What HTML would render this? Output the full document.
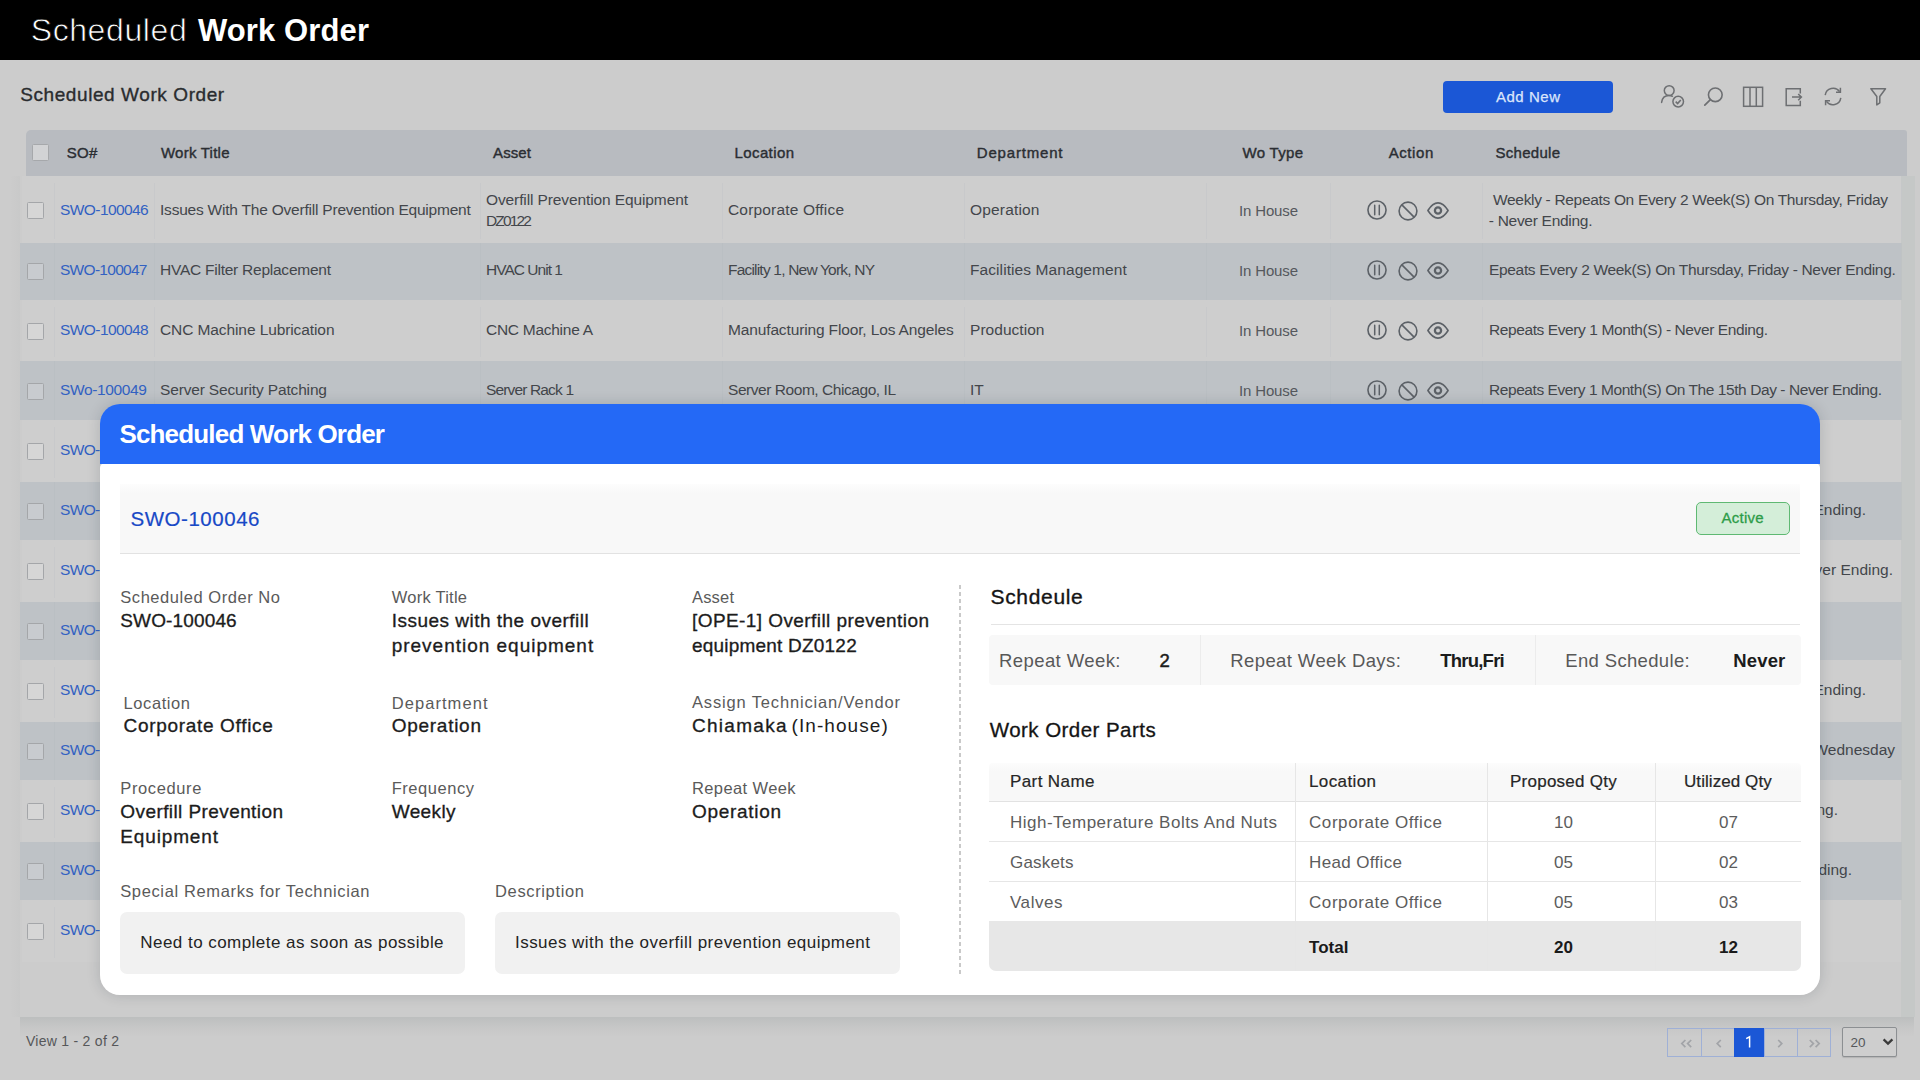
<!DOCTYPE html>
<html><head><meta charset="utf-8"><title>Scheduled Work Order</title>
<style>
html,body{margin:0;padding:0;}
body{width:1920px;height:1080px;overflow:hidden;position:relative;background:#cccccc;font-family:"Liberation Sans",sans-serif;}
.layer{position:absolute;left:0;top:0;width:1920px;height:1080px;overflow:hidden;}
.layer>div{position:absolute;box-sizing:border-box;}
.layer>svg{position:absolute;overflow:visible;}
.t{position:absolute;white-space:nowrap;line-height:0;}
.thin{-webkit-text-stroke:0.75px #000;}
</style></head><body>
<div class="layer" style="">
<div style="left:0px;top:0px;width:1920px;height:60px;background:#000;"></div>
<div style="left:1443px;top:81px;width:170px;height:31.5px;background:#1b57d6;border-radius:4px;"></div>
<div style="left:19.5px;top:1016.5px;width:1894px;height:20px;background:linear-gradient(rgba(40,60,60,.095),rgba(40,60,60,.03) 55%,rgba(40,60,60,0));"></div>
<div style="left:10px;top:176px;width:10px;height:841px;background:linear-gradient(90deg,rgba(40,50,50,0),rgba(40,50,50,.018));"></div>
<div style="left:1901px;top:176px;width:13.5px;height:841px;background:#c5c8c7;"></div>
<div style="left:26px;top:130px;width:1881px;height:45.5px;background:#b8bbc0;border-radius:5px 3px 0 0;"></div>
<div style="left:32.3px;top:144.3px;width:16.5px;height:16.5px;background:#d2d3d5;border:1px solid #a6a8ab;border-radius:1.5px;"></div>
<div style="left:22px;top:175.5px;width:1879px;height:67.0px;background:#cecece;"></div>
<div style="left:20px;top:242.5px;width:1881px;height:57.5px;background:#bec2c6;"></div>
<div style="left:22px;top:300px;width:1879px;height:60.5px;background:#cecece;"></div>
<div style="left:20px;top:360.5px;width:1881px;height:59.0px;background:#bec2c6;"></div>
<div style="left:22px;top:419.5px;width:1879px;height:62.0px;background:#cecece;"></div>
<div style="left:20px;top:481.5px;width:1881px;height:58.0px;background:#bec2c6;"></div>
<div style="left:22px;top:539.5px;width:1879px;height:62.0px;background:#cecece;"></div>
<div style="left:20px;top:601.5px;width:1881px;height:58.0px;background:#bec2c6;"></div>
<div style="left:22px;top:659.5px;width:1879px;height:62.0px;background:#cecece;"></div>
<div style="left:20px;top:721.5px;width:1881px;height:58.0px;background:#bec2c6;"></div>
<div style="left:22px;top:779.5px;width:1879px;height:62.0px;background:#cecece;"></div>
<div style="left:20px;top:841.5px;width:1881px;height:58.0px;background:#bec2c6;"></div>
<div style="left:22px;top:899.5px;width:1879px;height:62.5px;background:#cecece;"></div>
<div style="left:54.0px;top:182.5px;width:1px;height:56.0px;background:#c4c6c9;opacity:.6;"></div>
<div style="left:154.0px;top:182.5px;width:1px;height:56.0px;background:#c4c6c9;opacity:.6;"></div>
<div style="left:480.0px;top:182.5px;width:1px;height:56.0px;background:#c4c6c9;opacity:.6;"></div>
<div style="left:721.5px;top:182.5px;width:1px;height:56.0px;background:#c4c6c9;opacity:.6;"></div>
<div style="left:963.5px;top:182.5px;width:1px;height:56.0px;background:#c4c6c9;opacity:.6;"></div>
<div style="left:1206.0px;top:182.5px;width:1px;height:56.0px;background:#c4c6c9;opacity:.6;"></div>
<div style="left:1330.0px;top:182.5px;width:1px;height:56.0px;background:#c4c6c9;opacity:.6;"></div>
<div style="left:1482.0px;top:182.5px;width:1px;height:56.0px;background:#c4c6c9;opacity:.6;"></div>
<div style="left:1900.5px;top:182.5px;width:1px;height:56.0px;background:#c4c6c9;opacity:.6;"></div>
<div style="left:54.0px;top:242.5px;width:1px;height:57.5px;background:#b4b8bd;opacity:.3;"></div>
<div style="left:154.0px;top:242.5px;width:1px;height:57.5px;background:#b4b8bd;opacity:.3;"></div>
<div style="left:480.0px;top:242.5px;width:1px;height:57.5px;background:#b4b8bd;opacity:.3;"></div>
<div style="left:721.5px;top:242.5px;width:1px;height:57.5px;background:#b4b8bd;opacity:.3;"></div>
<div style="left:963.5px;top:242.5px;width:1px;height:57.5px;background:#b4b8bd;opacity:.3;"></div>
<div style="left:1206.0px;top:242.5px;width:1px;height:57.5px;background:#b4b8bd;opacity:.3;"></div>
<div style="left:1330.0px;top:242.5px;width:1px;height:57.5px;background:#b4b8bd;opacity:.3;"></div>
<div style="left:1482.0px;top:242.5px;width:1px;height:57.5px;background:#b4b8bd;opacity:.3;"></div>
<div style="left:1900.5px;top:242.5px;width:1px;height:57.5px;background:#b4b8bd;opacity:.3;"></div>
<div style="left:54.0px;top:307px;width:1px;height:49.5px;background:#c4c6c9;opacity:.6;"></div>
<div style="left:154.0px;top:307px;width:1px;height:49.5px;background:#c4c6c9;opacity:.6;"></div>
<div style="left:480.0px;top:307px;width:1px;height:49.5px;background:#c4c6c9;opacity:.6;"></div>
<div style="left:721.5px;top:307px;width:1px;height:49.5px;background:#c4c6c9;opacity:.6;"></div>
<div style="left:963.5px;top:307px;width:1px;height:49.5px;background:#c4c6c9;opacity:.6;"></div>
<div style="left:1206.0px;top:307px;width:1px;height:49.5px;background:#c4c6c9;opacity:.6;"></div>
<div style="left:1330.0px;top:307px;width:1px;height:49.5px;background:#c4c6c9;opacity:.6;"></div>
<div style="left:1482.0px;top:307px;width:1px;height:49.5px;background:#c4c6c9;opacity:.6;"></div>
<div style="left:1900.5px;top:307px;width:1px;height:49.5px;background:#c4c6c9;opacity:.6;"></div>
<div style="left:54.0px;top:360.5px;width:1px;height:59.0px;background:#b4b8bd;opacity:.3;"></div>
<div style="left:154.0px;top:360.5px;width:1px;height:59.0px;background:#b4b8bd;opacity:.3;"></div>
<div style="left:480.0px;top:360.5px;width:1px;height:59.0px;background:#b4b8bd;opacity:.3;"></div>
<div style="left:721.5px;top:360.5px;width:1px;height:59.0px;background:#b4b8bd;opacity:.3;"></div>
<div style="left:963.5px;top:360.5px;width:1px;height:59.0px;background:#b4b8bd;opacity:.3;"></div>
<div style="left:1206.0px;top:360.5px;width:1px;height:59.0px;background:#b4b8bd;opacity:.3;"></div>
<div style="left:1330.0px;top:360.5px;width:1px;height:59.0px;background:#b4b8bd;opacity:.3;"></div>
<div style="left:1482.0px;top:360.5px;width:1px;height:59.0px;background:#b4b8bd;opacity:.3;"></div>
<div style="left:1900.5px;top:360.5px;width:1px;height:59.0px;background:#b4b8bd;opacity:.3;"></div>
<div style="left:54.0px;top:426.5px;width:1px;height:51.0px;background:#c4c6c9;opacity:.6;"></div>
<div style="left:154.0px;top:426.5px;width:1px;height:51.0px;background:#c4c6c9;opacity:.6;"></div>
<div style="left:480.0px;top:426.5px;width:1px;height:51.0px;background:#c4c6c9;opacity:.6;"></div>
<div style="left:721.5px;top:426.5px;width:1px;height:51.0px;background:#c4c6c9;opacity:.6;"></div>
<div style="left:963.5px;top:426.5px;width:1px;height:51.0px;background:#c4c6c9;opacity:.6;"></div>
<div style="left:1206.0px;top:426.5px;width:1px;height:51.0px;background:#c4c6c9;opacity:.6;"></div>
<div style="left:1330.0px;top:426.5px;width:1px;height:51.0px;background:#c4c6c9;opacity:.6;"></div>
<div style="left:1482.0px;top:426.5px;width:1px;height:51.0px;background:#c4c6c9;opacity:.6;"></div>
<div style="left:1900.5px;top:426.5px;width:1px;height:51.0px;background:#c4c6c9;opacity:.6;"></div>
<div style="left:54.0px;top:481.5px;width:1px;height:58.0px;background:#b4b8bd;opacity:.3;"></div>
<div style="left:154.0px;top:481.5px;width:1px;height:58.0px;background:#b4b8bd;opacity:.3;"></div>
<div style="left:480.0px;top:481.5px;width:1px;height:58.0px;background:#b4b8bd;opacity:.3;"></div>
<div style="left:721.5px;top:481.5px;width:1px;height:58.0px;background:#b4b8bd;opacity:.3;"></div>
<div style="left:963.5px;top:481.5px;width:1px;height:58.0px;background:#b4b8bd;opacity:.3;"></div>
<div style="left:1206.0px;top:481.5px;width:1px;height:58.0px;background:#b4b8bd;opacity:.3;"></div>
<div style="left:1330.0px;top:481.5px;width:1px;height:58.0px;background:#b4b8bd;opacity:.3;"></div>
<div style="left:1482.0px;top:481.5px;width:1px;height:58.0px;background:#b4b8bd;opacity:.3;"></div>
<div style="left:1900.5px;top:481.5px;width:1px;height:58.0px;background:#b4b8bd;opacity:.3;"></div>
<div style="left:54.0px;top:546.5px;width:1px;height:51.0px;background:#c4c6c9;opacity:.6;"></div>
<div style="left:154.0px;top:546.5px;width:1px;height:51.0px;background:#c4c6c9;opacity:.6;"></div>
<div style="left:480.0px;top:546.5px;width:1px;height:51.0px;background:#c4c6c9;opacity:.6;"></div>
<div style="left:721.5px;top:546.5px;width:1px;height:51.0px;background:#c4c6c9;opacity:.6;"></div>
<div style="left:963.5px;top:546.5px;width:1px;height:51.0px;background:#c4c6c9;opacity:.6;"></div>
<div style="left:1206.0px;top:546.5px;width:1px;height:51.0px;background:#c4c6c9;opacity:.6;"></div>
<div style="left:1330.0px;top:546.5px;width:1px;height:51.0px;background:#c4c6c9;opacity:.6;"></div>
<div style="left:1482.0px;top:546.5px;width:1px;height:51.0px;background:#c4c6c9;opacity:.6;"></div>
<div style="left:1900.5px;top:546.5px;width:1px;height:51.0px;background:#c4c6c9;opacity:.6;"></div>
<div style="left:54.0px;top:601.5px;width:1px;height:58.0px;background:#b4b8bd;opacity:.3;"></div>
<div style="left:154.0px;top:601.5px;width:1px;height:58.0px;background:#b4b8bd;opacity:.3;"></div>
<div style="left:480.0px;top:601.5px;width:1px;height:58.0px;background:#b4b8bd;opacity:.3;"></div>
<div style="left:721.5px;top:601.5px;width:1px;height:58.0px;background:#b4b8bd;opacity:.3;"></div>
<div style="left:963.5px;top:601.5px;width:1px;height:58.0px;background:#b4b8bd;opacity:.3;"></div>
<div style="left:1206.0px;top:601.5px;width:1px;height:58.0px;background:#b4b8bd;opacity:.3;"></div>
<div style="left:1330.0px;top:601.5px;width:1px;height:58.0px;background:#b4b8bd;opacity:.3;"></div>
<div style="left:1482.0px;top:601.5px;width:1px;height:58.0px;background:#b4b8bd;opacity:.3;"></div>
<div style="left:1900.5px;top:601.5px;width:1px;height:58.0px;background:#b4b8bd;opacity:.3;"></div>
<div style="left:54.0px;top:666.5px;width:1px;height:51.0px;background:#c4c6c9;opacity:.6;"></div>
<div style="left:154.0px;top:666.5px;width:1px;height:51.0px;background:#c4c6c9;opacity:.6;"></div>
<div style="left:480.0px;top:666.5px;width:1px;height:51.0px;background:#c4c6c9;opacity:.6;"></div>
<div style="left:721.5px;top:666.5px;width:1px;height:51.0px;background:#c4c6c9;opacity:.6;"></div>
<div style="left:963.5px;top:666.5px;width:1px;height:51.0px;background:#c4c6c9;opacity:.6;"></div>
<div style="left:1206.0px;top:666.5px;width:1px;height:51.0px;background:#c4c6c9;opacity:.6;"></div>
<div style="left:1330.0px;top:666.5px;width:1px;height:51.0px;background:#c4c6c9;opacity:.6;"></div>
<div style="left:1482.0px;top:666.5px;width:1px;height:51.0px;background:#c4c6c9;opacity:.6;"></div>
<div style="left:1900.5px;top:666.5px;width:1px;height:51.0px;background:#c4c6c9;opacity:.6;"></div>
<div style="left:54.0px;top:721.5px;width:1px;height:58.0px;background:#b4b8bd;opacity:.3;"></div>
<div style="left:154.0px;top:721.5px;width:1px;height:58.0px;background:#b4b8bd;opacity:.3;"></div>
<div style="left:480.0px;top:721.5px;width:1px;height:58.0px;background:#b4b8bd;opacity:.3;"></div>
<div style="left:721.5px;top:721.5px;width:1px;height:58.0px;background:#b4b8bd;opacity:.3;"></div>
<div style="left:963.5px;top:721.5px;width:1px;height:58.0px;background:#b4b8bd;opacity:.3;"></div>
<div style="left:1206.0px;top:721.5px;width:1px;height:58.0px;background:#b4b8bd;opacity:.3;"></div>
<div style="left:1330.0px;top:721.5px;width:1px;height:58.0px;background:#b4b8bd;opacity:.3;"></div>
<div style="left:1482.0px;top:721.5px;width:1px;height:58.0px;background:#b4b8bd;opacity:.3;"></div>
<div style="left:1900.5px;top:721.5px;width:1px;height:58.0px;background:#b4b8bd;opacity:.3;"></div>
<div style="left:54.0px;top:786.5px;width:1px;height:51.0px;background:#c4c6c9;opacity:.6;"></div>
<div style="left:154.0px;top:786.5px;width:1px;height:51.0px;background:#c4c6c9;opacity:.6;"></div>
<div style="left:480.0px;top:786.5px;width:1px;height:51.0px;background:#c4c6c9;opacity:.6;"></div>
<div style="left:721.5px;top:786.5px;width:1px;height:51.0px;background:#c4c6c9;opacity:.6;"></div>
<div style="left:963.5px;top:786.5px;width:1px;height:51.0px;background:#c4c6c9;opacity:.6;"></div>
<div style="left:1206.0px;top:786.5px;width:1px;height:51.0px;background:#c4c6c9;opacity:.6;"></div>
<div style="left:1330.0px;top:786.5px;width:1px;height:51.0px;background:#c4c6c9;opacity:.6;"></div>
<div style="left:1482.0px;top:786.5px;width:1px;height:51.0px;background:#c4c6c9;opacity:.6;"></div>
<div style="left:1900.5px;top:786.5px;width:1px;height:51.0px;background:#c4c6c9;opacity:.6;"></div>
<div style="left:54.0px;top:841.5px;width:1px;height:58.0px;background:#b4b8bd;opacity:.3;"></div>
<div style="left:154.0px;top:841.5px;width:1px;height:58.0px;background:#b4b8bd;opacity:.3;"></div>
<div style="left:480.0px;top:841.5px;width:1px;height:58.0px;background:#b4b8bd;opacity:.3;"></div>
<div style="left:721.5px;top:841.5px;width:1px;height:58.0px;background:#b4b8bd;opacity:.3;"></div>
<div style="left:963.5px;top:841.5px;width:1px;height:58.0px;background:#b4b8bd;opacity:.3;"></div>
<div style="left:1206.0px;top:841.5px;width:1px;height:58.0px;background:#b4b8bd;opacity:.3;"></div>
<div style="left:1330.0px;top:841.5px;width:1px;height:58.0px;background:#b4b8bd;opacity:.3;"></div>
<div style="left:1482.0px;top:841.5px;width:1px;height:58.0px;background:#b4b8bd;opacity:.3;"></div>
<div style="left:1900.5px;top:841.5px;width:1px;height:58.0px;background:#b4b8bd;opacity:.3;"></div>
<div style="left:54.0px;top:906.5px;width:1px;height:51.5px;background:#c4c6c9;opacity:.6;"></div>
<div style="left:154.0px;top:906.5px;width:1px;height:51.5px;background:#c4c6c9;opacity:.6;"></div>
<div style="left:480.0px;top:906.5px;width:1px;height:51.5px;background:#c4c6c9;opacity:.6;"></div>
<div style="left:721.5px;top:906.5px;width:1px;height:51.5px;background:#c4c6c9;opacity:.6;"></div>
<div style="left:963.5px;top:906.5px;width:1px;height:51.5px;background:#c4c6c9;opacity:.6;"></div>
<div style="left:1206.0px;top:906.5px;width:1px;height:51.5px;background:#c4c6c9;opacity:.6;"></div>
<div style="left:1330.0px;top:906.5px;width:1px;height:51.5px;background:#c4c6c9;opacity:.6;"></div>
<div style="left:1482.0px;top:906.5px;width:1px;height:51.5px;background:#c4c6c9;opacity:.6;"></div>
<div style="left:1900.5px;top:906.5px;width:1px;height:51.5px;background:#c4c6c9;opacity:.6;"></div>
<div style="left:27px;top:201.5px;width:17px;height:17px;background:rgba(255,255,255,.16);border:1px solid #a4a6a9;border-radius:1.5px;"></div>
<div style="left:27px;top:262.5px;width:17px;height:17px;background:rgba(255,255,255,.16);border:1px solid #a4a6a9;border-radius:1.5px;"></div>
<div style="left:27px;top:322.5px;width:17px;height:17px;background:rgba(255,255,255,.16);border:1px solid #a4a6a9;border-radius:1.5px;"></div>
<div style="left:27px;top:382.5px;width:17px;height:17px;background:rgba(255,255,255,.16);border:1px solid #a4a6a9;border-radius:1.5px;"></div>
<div style="left:27px;top:442.5px;width:17px;height:17px;background:rgba(255,255,255,.16);border:1px solid #a4a6a9;border-radius:1.5px;"></div>
<div style="left:27px;top:502.5px;width:17px;height:17px;background:rgba(255,255,255,.16);border:1px solid #a4a6a9;border-radius:1.5px;"></div>
<div style="left:27px;top:562.5px;width:17px;height:17px;background:rgba(255,255,255,.16);border:1px solid #a4a6a9;border-radius:1.5px;"></div>
<div style="left:27px;top:622.5px;width:17px;height:17px;background:rgba(255,255,255,.16);border:1px solid #a4a6a9;border-radius:1.5px;"></div>
<div style="left:27px;top:682.5px;width:17px;height:17px;background:rgba(255,255,255,.16);border:1px solid #a4a6a9;border-radius:1.5px;"></div>
<div style="left:27px;top:742.5px;width:17px;height:17px;background:rgba(255,255,255,.16);border:1px solid #a4a6a9;border-radius:1.5px;"></div>
<div style="left:27px;top:802.5px;width:17px;height:17px;background:rgba(255,255,255,.16);border:1px solid #a4a6a9;border-radius:1.5px;"></div>
<div style="left:27px;top:862.5px;width:17px;height:17px;background:rgba(255,255,255,.16);border:1px solid #a4a6a9;border-radius:1.5px;"></div>
<div style="left:27px;top:922.5px;width:17px;height:17px;background:rgba(255,255,255,.16);border:1px solid #a4a6a9;border-radius:1.5px;"></div>
<div style="left:1667px;top:1027.5px;width:164px;height:29.5px;border:1px solid #9fb0d6;"></div>
<div style="left:1701px;top:1027.5px;width:1px;height:29.5px;background:#9fb0d6;"></div>
<div style="left:1764px;top:1027.5px;width:1px;height:29.5px;background:#9fb0d6;"></div>
<div style="left:1796.5px;top:1027.5px;width:1px;height:29.5px;background:#9fb0d6;"></div>
<div style="left:1734px;top:1027.5px;width:30px;height:29.5px;background:#1b57d6;"></div>
<div style="left:1841.5px;top:1027px;width:55.5px;height:29.5px;border:1px solid #8c8f92;border-radius:2px;background:#cecece;box-shadow:0 1px 1px rgba(0,0,0,.12);"></div>
<span class="t thin" style="top:30.31px;font-size:32px;color:#ffffff;letter-spacing:0.596px;left:30.7px;">Scheduled</span>
<span class="t" style="top:31.06px;font-size:31px;color:#fff;font-weight:bold;letter-spacing:0.113px;left:198px;">Work Order</span>
<span class="t" style="top:94.52px;font-size:19px;color:#2a2c2f;-webkit-text-stroke:0.35px #2a2c2f;letter-spacing:0.584px;left:20.2px;">Scheduled Work Order</span>
<span class="t" style="top:96.80px;font-size:15px;color:#dbe5fb;-webkit-text-stroke:0.25px #dbe5fb;letter-spacing:0.521px;left:1328.26px;width:400px;text-align:center;">Add New</span>
<span class="t" style="top:152.80px;font-size:15px;color:#2b2e33;-webkit-text-stroke:0.4px #2b2e33;letter-spacing:0.242px;left:66.75px;">SO#</span>
<span class="t" style="top:152.80px;font-size:15px;color:#2b2e33;-webkit-text-stroke:0.4px #2b2e33;letter-spacing:0.233px;left:161px;">Work Title</span>
<span class="t" style="top:152.80px;font-size:15px;color:#2b2e33;-webkit-text-stroke:0.4px #2b2e33;letter-spacing:0.121px;left:493px;">Asset</span>
<span class="t" style="top:152.80px;font-size:15px;color:#2b2e33;-webkit-text-stroke:0.4px #2b2e33;letter-spacing:0.397px;left:734.5px;">Location</span>
<span class="t" style="top:152.80px;font-size:15px;color:#2b2e33;-webkit-text-stroke:0.4px #2b2e33;letter-spacing:0.819px;left:976.75px;">Department</span>
<span class="t" style="top:152.80px;font-size:15px;color:#2b2e33;-webkit-text-stroke:0.4px #2b2e33;letter-spacing:0.307px;left:1242.5px;">Wo Type</span>
<span class="t" style="top:152.80px;font-size:15px;color:#2b2e33;-webkit-text-stroke:0.4px #2b2e33;letter-spacing:0.559px;left:1388.75px;">Action</span>
<span class="t" style="top:152.80px;font-size:15px;color:#2b2e33;-webkit-text-stroke:0.4px #2b2e33;letter-spacing:0.277px;left:1495.5px;">Schedule</span>
<span class="t" style="top:210.13px;font-size:15.5px;color:#3261c2;letter-spacing:-0.575px;left:60px;">SWO-100046</span>
<span class="t" style="top:210.13px;font-size:15.5px;color:#43464b;letter-spacing:-0.214px;left:160px;">Issues With The Overfill Prevention Equipment</span>
<span class="t" style="top:210.13px;font-size:15.5px;color:#43464b;letter-spacing:0.171px;left:728px;">Corporate Office</span>
<span class="t" style="top:210.13px;font-size:15.5px;color:#43464b;letter-spacing:0.178px;left:970px;">Operation</span>
<span class="t" style="top:211.05px;font-size:15px;color:#55585d;letter-spacing:-0.150px;left:1239px;">In House</span>
<span class="t" style="top:270.13px;font-size:15.5px;color:#3261c2;letter-spacing:-0.714px;left:60px;">SWO-100047</span>
<span class="t" style="top:270.13px;font-size:15.5px;color:#43464b;letter-spacing:-0.241px;left:160px;">HVAC Filter Replacement</span>
<span class="t" style="top:270.13px;font-size:15.5px;color:#43464b;letter-spacing:-0.972px;left:486px;">HVAC Unit 1</span>
<span class="t" style="top:270.13px;font-size:15.5px;color:#43464b;letter-spacing:-0.800px;left:728px;">Facility 1, New York, NY</span>
<span class="t" style="top:270.13px;font-size:15.5px;color:#43464b;letter-spacing:0.084px;left:970px;">Facilities Management</span>
<span class="t" style="top:271.05px;font-size:15px;color:#55585d;letter-spacing:-0.150px;left:1239px;">In House</span>
<span class="t" style="top:270.13px;font-size:15.5px;color:#43464b;letter-spacing:-0.330px;left:1489px;">Epeats Every 2 Week(S) On Thursday, Friday - Never Ending.</span>
<span class="t" style="top:330.13px;font-size:15.5px;color:#3261c2;letter-spacing:-0.575px;left:60px;">SWO-100048</span>
<span class="t" style="top:330.13px;font-size:15.5px;color:#43464b;letter-spacing:-0.096px;left:160px;">CNC Machine Lubrication</span>
<span class="t" style="top:330.13px;font-size:15.5px;color:#43464b;letter-spacing:-0.272px;left:486px;">CNC Machine A</span>
<span class="t" style="top:330.13px;font-size:15.5px;color:#43464b;letter-spacing:-0.139px;left:728px;">Manufacturing Floor, Los Angeles</span>
<span class="t" style="top:330.13px;font-size:15.5px;color:#43464b;letter-spacing:0.043px;left:970px;">Production</span>
<span class="t" style="top:331.05px;font-size:15px;color:#55585d;letter-spacing:-0.150px;left:1239px;">In House</span>
<span class="t" style="top:330.13px;font-size:15.5px;color:#43464b;letter-spacing:-0.401px;left:1489px;">Repeats Every 1 Month(S) - Never Ending.</span>
<span class="t" style="top:390.13px;font-size:15.5px;color:#3261c2;letter-spacing:-0.356px;left:60px;">SWo-100049</span>
<span class="t" style="top:390.13px;font-size:15.5px;color:#43464b;letter-spacing:-0.156px;left:160px;">Server Security Patching</span>
<span class="t" style="top:390.13px;font-size:15.5px;color:#43464b;letter-spacing:-0.850px;left:486px;">Server Rack 1</span>
<span class="t" style="top:390.13px;font-size:15.5px;color:#43464b;letter-spacing:-0.449px;left:728px;">Server Room, Chicago, IL</span>
<span class="t" style="top:390.13px;font-size:15.5px;color:#43464b;left:970px;">IT</span>
<span class="t" style="top:391.05px;font-size:15px;color:#55585d;letter-spacing:-0.150px;left:1239px;">In House</span>
<span class="t" style="top:390.13px;font-size:15.5px;color:#43464b;letter-spacing:-0.431px;left:1489px;">Repeats Every 1 Month(S) On The 15th Day - Never Ending.</span>
<span class="t" style="top:450.13px;font-size:15.5px;color:#3261c2;letter-spacing:-0.658px;left:60px;">SWO-100050</span>
<span class="t" style="top:510.13px;font-size:15.5px;color:#3261c2;letter-spacing:-0.658px;left:60px;">SWO-100051</span>
<span class="t" style="top:570.13px;font-size:15.5px;color:#3261c2;letter-spacing:-0.658px;left:60px;">SWO-100052</span>
<span class="t" style="top:630.13px;font-size:15.5px;color:#3261c2;letter-spacing:-0.658px;left:60px;">SWO-100053</span>
<span class="t" style="top:690.13px;font-size:15.5px;color:#3261c2;letter-spacing:-0.658px;left:60px;">SWO-100054</span>
<span class="t" style="top:750.13px;font-size:15.5px;color:#3261c2;letter-spacing:-0.658px;left:60px;">SWO-100055</span>
<span class="t" style="top:810.13px;font-size:15.5px;color:#3261c2;letter-spacing:-0.658px;left:60px;">SWO-100056</span>
<span class="t" style="top:870.13px;font-size:15.5px;color:#3261c2;letter-spacing:-0.658px;left:60px;">SWO-100057</span>
<span class="t" style="top:930.13px;font-size:15.5px;color:#3261c2;letter-spacing:-0.658px;left:60px;">SWO-100058</span>
<span class="t" style="top:199.63px;font-size:15.5px;color:#43464b;letter-spacing:-0.109px;left:486px;">Overfill Prevention Equipment</span>
<span class="t" style="top:220.63px;font-size:15.5px;color:#43464b;letter-spacing:-1.831px;left:486px;">DZ0122</span>
<span class="t" style="top:199.63px;font-size:15.5px;color:#43464b;letter-spacing:-0.321px;left:1493px;">Weekly - Repeats On Every 2 Week(S) On Thursday, Friday</span>
<span class="t" style="top:220.63px;font-size:15.5px;color:#43464b;letter-spacing:-0.282px;left:1488.75px;">- Never Ending.</span>
<span class="t" style="top:510.13px;font-size:15.5px;color:#43464b;right:54.00px;">Repeats Every 3 Month(S) - Never Ending.</span>
<span class="t" style="top:570.13px;font-size:15.5px;color:#43464b;right:27.00px;">Repeats Every 2 Week(S) On Monday - Never Ending.</span>
<span class="t" style="top:690.13px;font-size:15.5px;color:#43464b;right:54.00px;">Repeats Every 6 Month(S) - Never Ending.</span>
<span class="t" style="top:750.13px;font-size:15.5px;color:#43464b;right:25.00px;">Weekly - Repeats On Every 1 Week(S) On Wednesday</span>
<span class="t" style="top:810.13px;font-size:15.5px;color:#43464b;right:82.00px;">Repeats Every 1 Year(S) - Never Ending.</span>
<span class="t" style="top:870.13px;font-size:15.5px;color:#43464b;right:68.00px;">Repeats Every 1 Month(S) - Never Ending.</span>
<span class="t" style="top:1041.45px;font-size:14px;color:#565759;letter-spacing:0.268px;left:26px;">View 1 - 2 of 2</span>
<span class="t" style="top:1042.62px;font-size:13.5px;color:#55585b;left:1850.5px;">20</span>
<svg style="left:1367.2px;top:199.8px;" width="20" height="20" viewBox="0 0 20 20" fill="none" ><circle cx="10" cy="10" r="9.05" stroke="#5c6167" stroke-width="1.6"/><path d="M7.7 5.3v9.4M12.3 5.3v9.4" stroke="#5c6167" stroke-width="1.5" stroke-linecap="round"/></svg>
<svg style="left:1398.2px;top:200.5px;" width="20" height="20" viewBox="0 0 20 20" fill="none" ><circle cx="10" cy="10" r="8.9" stroke="#5c6167" stroke-width="1.6"/><path d="M3.9 3.9L16.1 16.1" stroke="#5c6167" stroke-width="1.6"/></svg>
<svg style="left:1427.1px;top:202.0px;" width="22" height="17" viewBox="0 0 22 17" fill="none" ><path d="M0.9 8.5C4.2 3.2 7.6 0.9 11 0.9S17.8 3.2 21.1 8.5C17.8 13.8 14.4 16.1 11 16.1S4.2 13.8 0.9 8.5Z" stroke="#5c6167" stroke-width="1.6" stroke-linejoin="round"/><circle cx="11" cy="8.5" r="3.1" stroke="#5c6167" stroke-width="2.3"/></svg>
<svg style="left:1367.2px;top:259.8px;" width="20" height="20" viewBox="0 0 20 20" fill="none" ><circle cx="10" cy="10" r="9.05" stroke="#5c6167" stroke-width="1.6"/><path d="M7.7 5.3v9.4M12.3 5.3v9.4" stroke="#5c6167" stroke-width="1.5" stroke-linecap="round"/></svg>
<svg style="left:1398.2px;top:260.5px;" width="20" height="20" viewBox="0 0 20 20" fill="none" ><circle cx="10" cy="10" r="8.9" stroke="#5c6167" stroke-width="1.6"/><path d="M3.9 3.9L16.1 16.1" stroke="#5c6167" stroke-width="1.6"/></svg>
<svg style="left:1427.1px;top:262.0px;" width="22" height="17" viewBox="0 0 22 17" fill="none" ><path d="M0.9 8.5C4.2 3.2 7.6 0.9 11 0.9S17.8 3.2 21.1 8.5C17.8 13.8 14.4 16.1 11 16.1S4.2 13.8 0.9 8.5Z" stroke="#5c6167" stroke-width="1.6" stroke-linejoin="round"/><circle cx="11" cy="8.5" r="3.1" stroke="#5c6167" stroke-width="2.3"/></svg>
<svg style="left:1367.2px;top:319.8px;" width="20" height="20" viewBox="0 0 20 20" fill="none" ><circle cx="10" cy="10" r="9.05" stroke="#5c6167" stroke-width="1.6"/><path d="M7.7 5.3v9.4M12.3 5.3v9.4" stroke="#5c6167" stroke-width="1.5" stroke-linecap="round"/></svg>
<svg style="left:1398.2px;top:320.5px;" width="20" height="20" viewBox="0 0 20 20" fill="none" ><circle cx="10" cy="10" r="8.9" stroke="#5c6167" stroke-width="1.6"/><path d="M3.9 3.9L16.1 16.1" stroke="#5c6167" stroke-width="1.6"/></svg>
<svg style="left:1427.1px;top:322.0px;" width="22" height="17" viewBox="0 0 22 17" fill="none" ><path d="M0.9 8.5C4.2 3.2 7.6 0.9 11 0.9S17.8 3.2 21.1 8.5C17.8 13.8 14.4 16.1 11 16.1S4.2 13.8 0.9 8.5Z" stroke="#5c6167" stroke-width="1.6" stroke-linejoin="round"/><circle cx="11" cy="8.5" r="3.1" stroke="#5c6167" stroke-width="2.3"/></svg>
<svg style="left:1367.2px;top:379.8px;" width="20" height="20" viewBox="0 0 20 20" fill="none" ><circle cx="10" cy="10" r="9.05" stroke="#5c6167" stroke-width="1.6"/><path d="M7.7 5.3v9.4M12.3 5.3v9.4" stroke="#5c6167" stroke-width="1.5" stroke-linecap="round"/></svg>
<svg style="left:1398.2px;top:380.5px;" width="20" height="20" viewBox="0 0 20 20" fill="none" ><circle cx="10" cy="10" r="8.9" stroke="#5c6167" stroke-width="1.6"/><path d="M3.9 3.9L16.1 16.1" stroke="#5c6167" stroke-width="1.6"/></svg>
<svg style="left:1427.1px;top:382.0px;" width="22" height="17" viewBox="0 0 22 17" fill="none" ><path d="M0.9 8.5C4.2 3.2 7.6 0.9 11 0.9S17.8 3.2 21.1 8.5C17.8 13.8 14.4 16.1 11 16.1S4.2 13.8 0.9 8.5Z" stroke="#5c6167" stroke-width="1.6" stroke-linejoin="round"/><circle cx="11" cy="8.5" r="3.1" stroke="#5c6167" stroke-width="2.3"/></svg>
<svg style="left:0px;top:0px;" width="1920" height="1080" viewBox="0 0 1920 1080" fill="none" ><path d="M1685.3999999999999 1040.0L1681.8 1043.6L1685.3999999999999 1047.1999999999998" stroke="#a2a4a8" stroke-width="1.7" fill="none"/><path d="M1691.2 1040.0L1687.6000000000001 1043.6L1691.2 1047.1999999999998" stroke="#a2a4a8" stroke-width="1.7" fill="none"/></svg>
<svg style="left:0px;top:0px;" width="1920" height="1080" viewBox="0 0 1920 1080" fill="none" ><path d="M1720.8 1040.0L1717.2 1043.6L1720.8 1047.1999999999998" stroke="#a2a4a8" stroke-width="1.7" fill="none"/></svg>
<svg style="left:0px;top:0px;" width="1920" height="1080" viewBox="0 0 1920 1080" fill="none" ><path d="M1778.2 1040.0L1781.8 1043.6L1778.2 1047.1999999999998" stroke="#a2a4a8" stroke-width="1.7" fill="none"/></svg>
<svg style="left:0px;top:0px;" width="1920" height="1080" viewBox="0 0 1920 1080" fill="none" ><path d="M1809.8 1040.0L1813.3999999999999 1043.6L1809.8 1047.1999999999998" stroke="#a2a4a8" stroke-width="1.7" fill="none"/><path d="M1815.6000000000001 1040.0L1819.2 1043.6L1815.6000000000001 1047.1999999999998" stroke="#a2a4a8" stroke-width="1.7" fill="none"/></svg>
<svg style="left:1744px;top:1035px;" width="10" height="14" viewBox="0 0 10 14" fill="none" ><path d="M2.2 3.6L5.6 1.8V12.4" stroke="#fff" stroke-width="1.5" fill="none"/></svg>
<svg style="left:1881px;top:1036px;" width="14" height="12" viewBox="0 0 14 12" fill="none" ><path d="M2.6 3.4L7 7.6L11.4 3.4" stroke="#3a3a3a" stroke-width="2.3" fill="none"/></svg>
<svg style="left:1660.4px;top:84.4px;" width="26" height="25" viewBox="0 0 26 25" fill="none" ><circle cx="9.2" cy="6.6" r="4.9" stroke="#6d6f72" stroke-width="1.5"/><path d="M1.6 18.4C2.2 14 5 11.6 9 11.6c1.3 0 2.4.25 3.4.7" stroke="#6d6f72" stroke-width="1.5" stroke-linecap="round"/><circle cx="18.2" cy="17.6" r="5.3" stroke="#6d6f72" stroke-width="1.5"/><path d="M15.7 17.6l1.9 1.9 3.2-3.5" stroke="#6d6f72" stroke-width="1.6"/></svg>
<svg style="left:1702px;top:85px;" width="23" height="22" viewBox="0 0 23 22" fill="none" ><circle cx="13.3" cy="9.8" r="6.85" stroke="#6d6f72" stroke-width="1.6"/><path d="M8.4 14.7L2.8 20.2" stroke="#6d6f72" stroke-width="1.7" stroke-linecap="round"/></svg>
<svg style="left:1742px;top:86px;" width="22" height="22" viewBox="0 0 22 22" fill="none" ><rect x="1.6" y="1.3" width="19" height="19" stroke="#6d6f72" stroke-width="1.5"/><path d="M8 1.3v19M14.3 1.3v19" stroke="#6d6f72" stroke-width="1.5"/></svg>
<svg style="left:1784px;top:87px;" width="19" height="20" viewBox="0 0 19 20" fill="none" ><path d="M16.3 6.5V1.8H2.2v16.6h14.1v-4.6" stroke="#6d6f72" stroke-width="1.5"/><path d="M8 10.1h9.3M14.2 7l3.2 3.1-3.2 3.1" stroke="#6d6f72" stroke-width="1.5"/></svg>
<svg style="left:1823px;top:86px;" width="20" height="21" viewBox="0 0 20 21" fill="none" ><path d="M2.2 9.2A8 8 0 0 1 16.6 5.6M17.8 11.8A8 8 0 0 1 3.4 15.4" stroke="#6d6f72" stroke-width="1.5"/><path d="M17.4 1.8v4.4h-4.4M2.6 19.2v-4.4h4.4" stroke="#6d6f72" stroke-width="1.5"/></svg>
<svg style="left:1869px;top:86px;" width="19" height="20" viewBox="0 0 19 20" fill="none" ><path d="M1.9 2.7h14.6L10.8 10.5v6.3l-3 2.1v-8.4z" stroke="#6d6f72" stroke-width="1.5" stroke-linejoin="round"/></svg>
</div>
<div class="layer" style="">
<div style="left:100px;top:404px;width:1720px;height:591px;border-radius:20px;box-shadow:0 0 14px rgba(20,30,40,.17);"></div>
<div style="left:100px;top:463px;width:1720px;height:532px;background:#fff;border-radius:5px 5px 20px 20px;"></div>
<div style="left:100px;top:404px;width:1720px;height:59.5px;background:#2469f6;border-radius:20px 20px 0 0;"></div>
<div style="left:120px;top:484px;width:1680px;height:70px;background:linear-gradient(#fdfdfd,#f8f8f8 10px);border-bottom:1px solid #e2e2e2;"></div>
<div style="left:1696px;top:502px;width:94px;height:33px;background:#d4eed9;border:1px solid #5fb973;border-radius:5px;"></div>
<div style="left:120px;top:911.5px;width:345px;height:62px;background:#f1f1f1;border-radius:7px;"></div>
<div style="left:495px;top:911.5px;width:405px;height:62px;background:#f1f1f1;border-radius:7px;"></div>
<div style="left:959.2px;top:585px;width:1.6px;height:391px;background:repeating-linear-gradient(180deg,#c9c9c9 0 4px,transparent 4px 7px);"></div>
<div style="left:991px;top:624px;width:809px;height:1px;background:#e4e4e4;"></div>
<div style="left:989px;top:635px;width:812px;height:49.5px;background:#f8f8f8;border-radius:4px;"></div>
<div style="left:1199.5px;top:635px;width:1px;height:49.5px;background:#ececec;"></div>
<div style="left:1534.5px;top:635px;width:1px;height:49.5px;background:#ececec;"></div>
<div style="left:989px;top:763px;width:812px;height:38.5px;background:linear-gradient(#fcfcfc,#f8f8f8 8px);border-bottom:1px solid #e2e2e2;border-radius:4px 4px 0 0;"></div>
<div style="left:989px;top:840.5px;width:812px;height:1px;background:#e6e6e6;"></div>
<div style="left:989px;top:880.5px;width:812px;height:1px;background:#e6e6e6;"></div>
<div style="left:989px;top:921px;width:812px;height:50px;background:#e7e7e7;border-radius:0 0 7px 7px;"></div>
<div style="left:1295px;top:763px;width:1px;height:208px;background:#e6e6e6;"></div>
<div style="left:1487px;top:763px;width:1px;height:208px;background:#e6e6e6;"></div>
<div style="left:1655px;top:763px;width:1px;height:208px;background:#e6e6e6;"></div>
<span class="t" style="top:434.39px;font-size:26px;color:#fff;font-weight:bold;letter-spacing:-0.825px;left:119.4px;">Scheduled Work Order</span>
<span class="t" style="top:518.90px;font-size:20.5px;color:#1849c6;-webkit-text-stroke:0.2px #1849c6;letter-spacing:0.533px;left:130.5px;">SWO-100046</span>
<span class="t" style="top:517.80px;font-size:15px;color:#2d9c48;-webkit-text-stroke:0.3px #2d9c48;letter-spacing:0.228px;left:1721.6px;">Active</span>
<span class="t" style="top:597.28px;font-size:16.5px;color:#5a5a5a;letter-spacing:0.546px;left:120.3px;">Scheduled Order No</span>
<span class="t" style="top:621.17px;font-size:19px;color:#1c1c1c;-webkit-text-stroke:0.32px #1c1c1c;letter-spacing:0.142px;left:120.3px;">SWO-100046</span>
<span class="t" style="top:597.28px;font-size:16.5px;color:#5a5a5a;letter-spacing:0.250px;left:391.7px;">Work Title</span>
<span class="t" style="top:621.17px;font-size:19px;color:#1c1c1c;-webkit-text-stroke:0.32px #1c1c1c;letter-spacing:0.484px;left:391.7px;">Issues with the overfill</span>
<span class="t" style="top:646.17px;font-size:19px;color:#1c1c1c;-webkit-text-stroke:0.32px #1c1c1c;letter-spacing:0.987px;left:391.7px;">prevention equipment</span>
<span class="t" style="top:597.28px;font-size:16.5px;color:#5a5a5a;letter-spacing:0.180px;left:692px;">Asset</span>
<span class="t" style="top:620.87px;font-size:19px;color:#1c1c1c;-webkit-text-stroke:0.32px #1c1c1c;letter-spacing:0.424px;left:692px;">[OPE-1] Overfill prevention</span>
<span class="t" style="top:645.87px;font-size:19px;color:#1c1c1c;-webkit-text-stroke:0.32px #1c1c1c;letter-spacing:0.206px;left:692px;">equipment DZ0122</span>
<span class="t" style="top:702.78px;font-size:16.5px;color:#5a5a5a;letter-spacing:0.573px;left:123.6px;">Location</span>
<span class="t" style="top:726.17px;font-size:19px;color:#1c1c1c;-webkit-text-stroke:0.32px #1c1c1c;letter-spacing:0.676px;left:123.6px;">Corporate Office</span>
<span class="t" style="top:702.78px;font-size:16.5px;color:#5a5a5a;letter-spacing:1.065px;left:391.7px;">Department</span>
<span class="t" style="top:726.17px;font-size:19px;color:#1c1c1c;-webkit-text-stroke:0.32px #1c1c1c;letter-spacing:0.731px;left:391.7px;">Operation</span>
<span class="t" style="top:702.48px;font-size:16.5px;color:#5a5a5a;letter-spacing:0.841px;left:692px;">Assign Technician/Vendor</span>
<span class="t" style="top:726.17px;font-size:19px;color:#1c1c1c;-webkit-text-stroke:0.32px #1c1c1c;letter-spacing:1.279px;left:692px;">Chiamaka</span>
<span class="t" style="top:726.17px;font-size:19px;color:#1c1c1c;letter-spacing:1.077px;left:791.5px;">(In-house)</span>
<span class="t" style="top:788.28px;font-size:16.5px;color:#5a5a5a;letter-spacing:0.620px;left:120.3px;">Procedure</span>
<span class="t" style="top:812.17px;font-size:19px;color:#1c1c1c;-webkit-text-stroke:0.32px #1c1c1c;letter-spacing:0.415px;left:120.3px;">Overfill Prevention</span>
<span class="t" style="top:837.17px;font-size:19px;color:#1c1c1c;-webkit-text-stroke:0.32px #1c1c1c;letter-spacing:0.857px;left:120.3px;">Equipment</span>
<span class="t" style="top:788.28px;font-size:16.5px;color:#5a5a5a;letter-spacing:0.541px;left:391.7px;">Frequency</span>
<span class="t" style="top:812.17px;font-size:19px;color:#1c1c1c;-webkit-text-stroke:0.32px #1c1c1c;letter-spacing:0.369px;left:391.7px;">Weekly</span>
<span class="t" style="top:788.28px;font-size:16.5px;color:#5a5a5a;letter-spacing:0.383px;left:692px;">Repeat Week</span>
<span class="t" style="top:811.87px;font-size:19px;color:#1c1c1c;-webkit-text-stroke:0.32px #1c1c1c;letter-spacing:0.693px;left:692px;">Operation</span>
<span class="t" style="top:891.28px;font-size:16.5px;color:#5a5a5a;letter-spacing:0.638px;left:120.2px;">Special Remarks for Technician</span>
<span class="t" style="top:891.28px;font-size:16.5px;color:#5a5a5a;letter-spacing:0.645px;left:495px;">Description</span>
<span class="t" style="top:942.91px;font-size:17px;color:#242424;letter-spacing:0.457px;left:140.3px;">Need to complete as soon as possible</span>
<span class="t" style="top:942.91px;font-size:17px;color:#242424;letter-spacing:0.466px;left:515px;">Issues with the overfill prevention equipment</span>
<span class="t" style="top:597.22px;font-size:21px;color:#141414;-webkit-text-stroke:0.35px #141414;letter-spacing:0.675px;left:990.5px;">Schdeule</span>
<span class="t" style="top:660.69px;font-size:18.5px;color:#585858;letter-spacing:0.419px;left:999px;">Repeat Week:</span>
<span class="t" style="top:660.69px;font-size:18.5px;color:#1c1c1c;-webkit-text-stroke:0.5px #1c1c1c;left:1159.4px;">2</span>
<span class="t" style="top:660.69px;font-size:18.5px;color:#585858;letter-spacing:0.395px;left:1230.3px;">Repeat Week Days:</span>
<span class="t" style="top:660.69px;font-size:18.5px;color:#1c1c1c;font-weight:bold;letter-spacing:-0.784px;left:1440.3px;">Thru,Fri</span>
<span class="t" style="top:660.69px;font-size:18.5px;color:#585858;letter-spacing:0.338px;left:1565.3px;">End Schedule:</span>
<span class="t" style="top:660.69px;font-size:18.5px;color:#1c1c1c;font-weight:bold;letter-spacing:0.141px;left:1733.3px;">Never</span>
<span class="t" style="top:730.20px;font-size:20.5px;color:#141414;-webkit-text-stroke:0.3px #141414;letter-spacing:0.459px;left:989.7px;">Work Order Parts</span>
<span class="t" style="top:781.51px;font-size:17px;color:#262626;-webkit-text-stroke:0.2px #262626;letter-spacing:0.394px;left:1010px;">Part Name</span>
<span class="t" style="top:781.51px;font-size:17px;color:#262626;-webkit-text-stroke:0.2px #262626;letter-spacing:0.388px;left:1309px;">Location</span>
<span class="t" style="top:781.51px;font-size:17px;color:#262626;-webkit-text-stroke:0.2px #262626;letter-spacing:0.250px;left:1510px;">Proposed Qty</span>
<span class="t" style="top:781.51px;font-size:17px;color:#262626;-webkit-text-stroke:0.2px #262626;letter-spacing:0.071px;left:1684px;">Utilized Qty</span>
<span class="t" style="top:822.51px;font-size:17px;color:#5c5c5c;letter-spacing:0.490px;left:1010px;">High-Temperature Bolts And Nuts</span>
<span class="t" style="top:822.51px;font-size:17px;color:#5c5c5c;letter-spacing:0.572px;left:1309px;">Corporate Office</span>
<span class="t" style="top:822.51px;font-size:17px;color:#5c5c5c;left:1363.50px;width:400px;text-align:center;">10</span>
<span class="t" style="top:822.51px;font-size:17px;color:#5c5c5c;left:1528.50px;width:400px;text-align:center;">07</span>
<span class="t" style="top:862.51px;font-size:17px;color:#5c5c5c;letter-spacing:0.190px;left:1010px;">Gaskets</span>
<span class="t" style="top:862.51px;font-size:17px;color:#5c5c5c;letter-spacing:0.353px;left:1309px;">Head Office</span>
<span class="t" style="top:862.51px;font-size:17px;color:#5c5c5c;left:1363.50px;width:400px;text-align:center;">05</span>
<span class="t" style="top:862.51px;font-size:17px;color:#5c5c5c;left:1528.50px;width:400px;text-align:center;">02</span>
<span class="t" style="top:902.51px;font-size:17px;color:#5c5c5c;letter-spacing:0.547px;left:1010px;">Valves</span>
<span class="t" style="top:902.51px;font-size:17px;color:#5c5c5c;letter-spacing:0.572px;left:1309px;">Corporate Office</span>
<span class="t" style="top:902.51px;font-size:17px;color:#5c5c5c;left:1363.50px;width:400px;text-align:center;">05</span>
<span class="t" style="top:902.51px;font-size:17px;color:#5c5c5c;left:1528.50px;width:400px;text-align:center;">03</span>
<span class="t" style="top:947.51px;font-size:17px;color:#1a1a1a;font-weight:bold;letter-spacing:0.035px;left:1309px;">Total</span>
<span class="t" style="top:947.51px;font-size:17px;color:#1a1a1a;font-weight:bold;left:1363.50px;width:400px;text-align:center;">20</span>
<span class="t" style="top:947.51px;font-size:17px;color:#1a1a1a;font-weight:bold;left:1528.50px;width:400px;text-align:center;">12</span>
</div>
</body></html>
